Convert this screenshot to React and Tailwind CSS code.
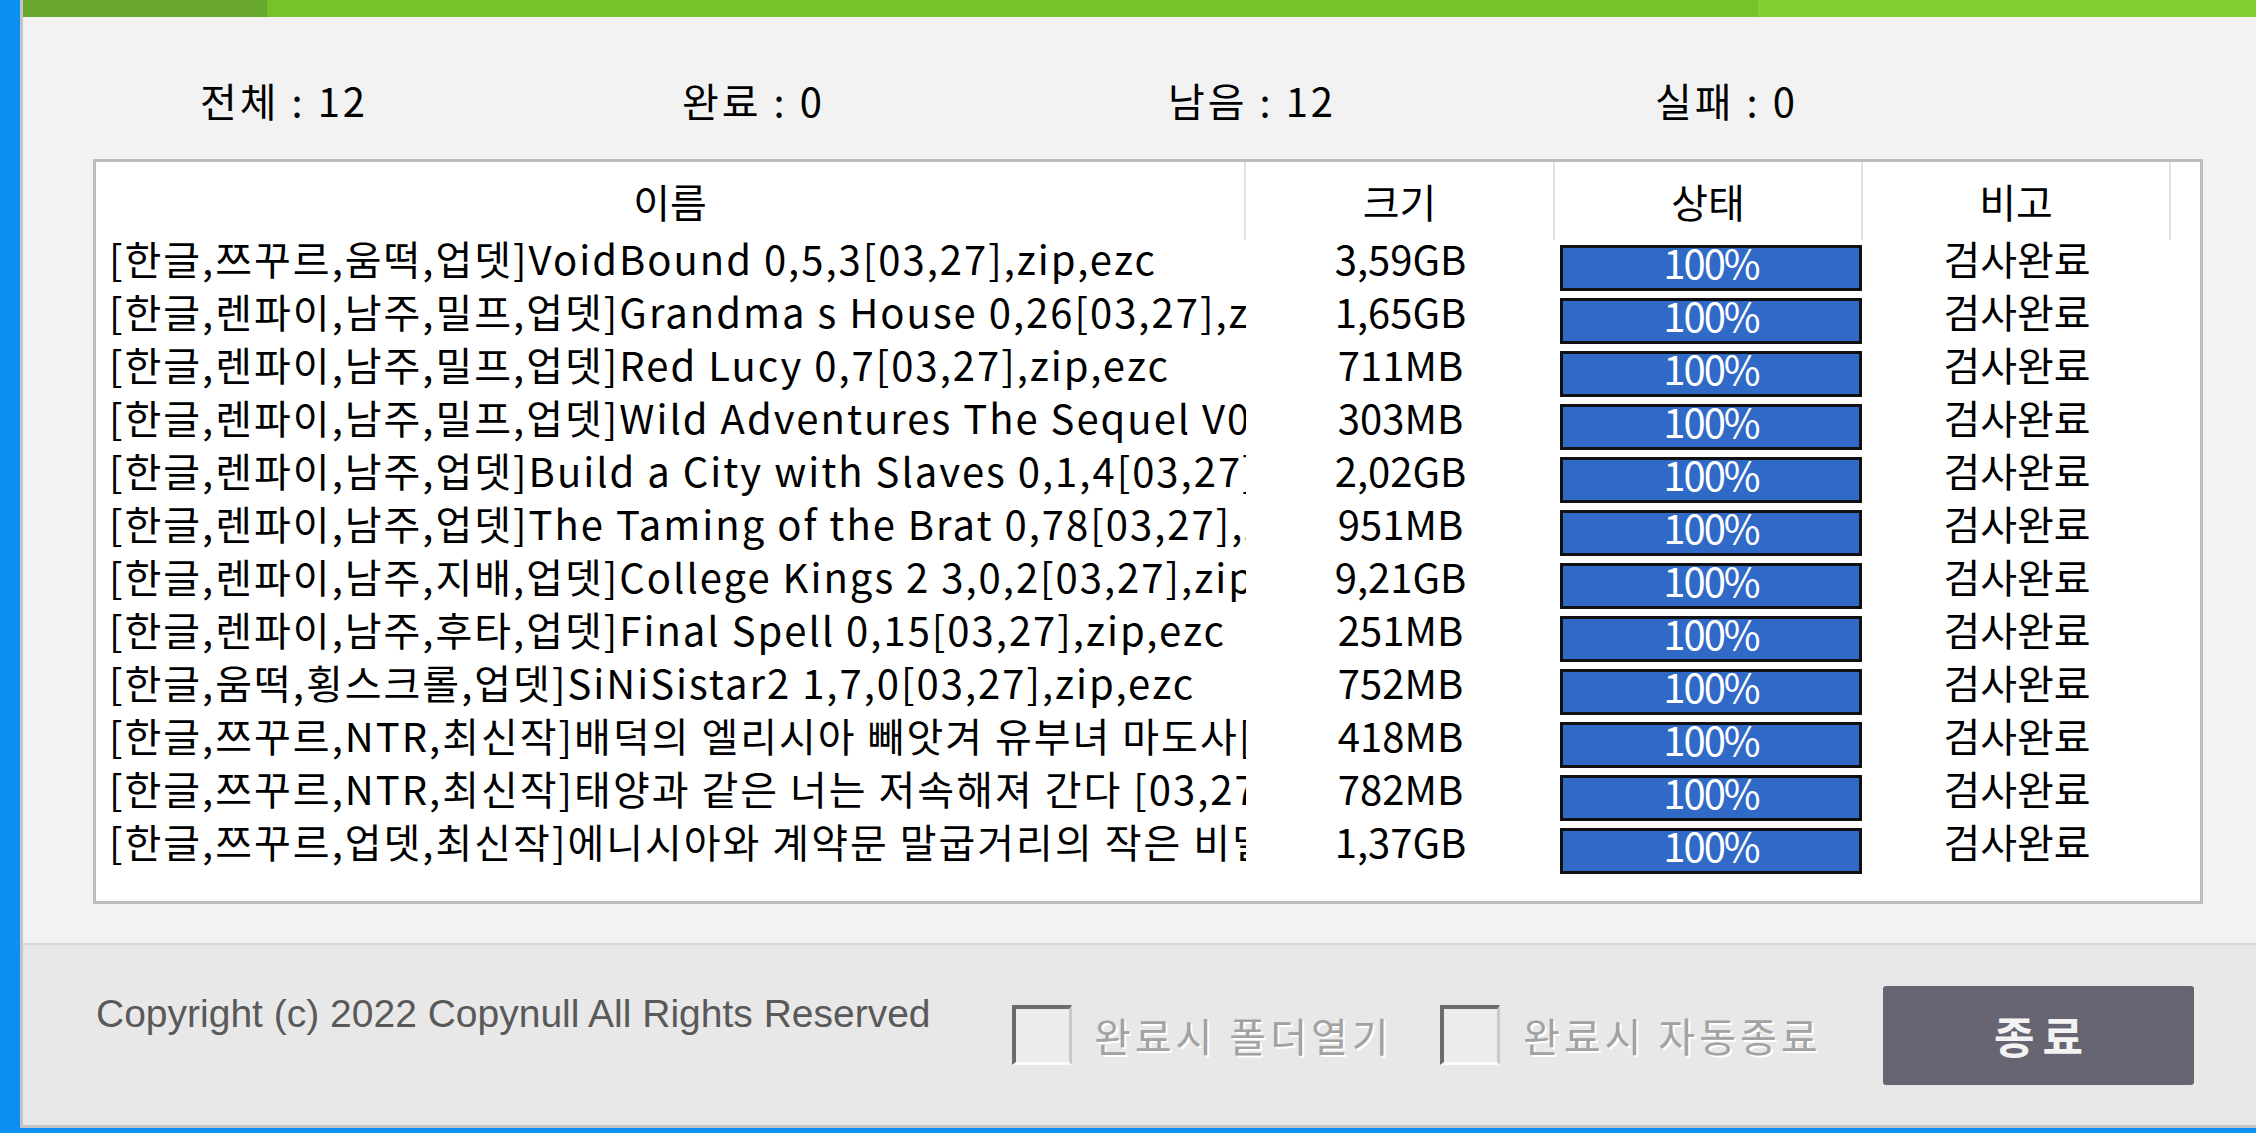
import React from "react";

const rows = [
  ["[한글,쯔꾸르,움떡,업뎃]VoidBound 0,5,3[03,27],zip,ezc", "3,59GB"],
  ["[한글,렌파이,남주,밀프,업뎃]Grandma s House 0,26[03,27],zip,ezc", "1,65GB"],
  ["[한글,렌파이,남주,밀프,업뎃]Red Lucy 0,7[03,27],zip,ezc", "711MB"],
  ["[한글,렌파이,남주,밀프,업뎃]Wild Adventures The Sequel V0,1[03,27],zip,ezc", "303MB"],
  ["[한글,렌파이,남주,업뎃]Build a City with Slaves 0,1,4[03,27],zip,ezc", "2,02GB"],
  ["[한글,렌파이,남주,업뎃]The Taming of the Brat 0,78[03,27],zip,ezc", "951MB"],
  ["[한글,렌파이,남주,지배,업뎃]College Kings 2 3,0,2[03,27],zip,ezc", "9,21GB"],
  ["[한글,렌파이,남주,후타,업뎃]Final Spell 0,15[03,27],zip,ezc", "251MB"],
  ["[한글,움떡,횡스크롤,업뎃]SiNiSistar2 1,7,0[03,27],zip,ezc", "752MB"],
  ["[한글,쯔꾸르,NTR,최신작]배덕의 엘리시아 빼앗겨 유부녀 마도사[03,27],zip,ezc", "418MB"],
  ["[한글,쯔꾸르,NTR,최신작]태양과 같은 너는 저속해져 간다 [03,27],zip,ezc", "782MB"],
  ["[한글,쯔꾸르,업뎃,최신작]에니시아와 계약문 말굽거리의 작은 비밀[03,27],zip,ezc", "1,37GB"],
];

function Checkbox() {
  return (
    <div className="w-[60px] h-[60px] shrink-0 border-t-[4px] border-l-[4px] border-r-[3px] border-b-[3px] border-t-[#6b6b6b] border-l-[#6b6b6b] border-r-[#c9c9c9] border-b-[#fbfbfb] bg-[#ececec]" />
  );
}

export default function App() {
  const kr = "font-['Noto_Sans_CJK_KR','Noto_Sans',sans-serif]";
  return (
    <div className={`w-[2256px] h-[1133px] bg-[#0b8ff2] flex overflow-hidden ${kr}`}>
      <div className="w-[20px] shrink-0" />
      <div className="flex-1 h-[1128px] flex flex-col border-l-[3px] border-b-[3px] border-[#c4c4c4] bg-[#f2f2f2]">
        {/* progress bar */}
        <div className="h-[17px] flex shrink-0">
          <div className="w-[244px] bg-[#69a82e]" />
          <div className="w-[1491px] bg-[#77c22a]" />
          <div className="flex-1 bg-[#82cf31]" />
        </div>

        {/* stats */}
        <div className="h-[142px] shrink-0 flex items-start pt-[63px] pl-[177px] text-[40px] leading-[40px] tracking-[3px] text-black">
          <div className="w-[482px] whitespace-nowrap">전체 : 12</div>
          <div className="w-[486px] whitespace-nowrap">완료 : 0</div>
          <div className="w-[487px] whitespace-nowrap">남음 : 12</div>
          <div className="whitespace-nowrap">실패 : 0</div>
        </div>

        {/* table */}
        <div className="ml-[70px] w-[2110px] h-[745px] shrink-0 border-[3px] border-[#bcbcbc] bg-white flex flex-col text-[40px] text-black">
          <div className="h-[78px] flex leading-[40px]">
            <div className="w-[1150px] border-r-[2px] border-[#e3e3e3] flex items-center justify-center">이름</div>
            <div className="w-[309px] border-r-[2px] border-[#e3e3e3] flex items-center justify-center">크기</div>
            <div className="w-[308px] border-r-[2px] border-[#e3e3e3] flex items-center justify-center">상태</div>
            <div className="w-[308px] border-r-[2px] border-[#e3e3e3] flex items-center justify-center">비고</div>
            <div className="flex-1" />
          </div>
          {rows.map(([name, size], i) => (
            <div key={i} className="h-[53px] flex shrink-0 leading-[36px]">
              <div className="w-[1150px] pl-[13px] pr-[6px] overflow-hidden whitespace-nowrap tracking-[2px]">{name}</div>
              <div className="w-[309px] text-center whitespace-nowrap">{size}</div>
              <div className="w-[308px] pl-[5px] pt-[5px]">
                <div className="w-[302px] h-[46px] border-[3px] border-[#111111] bg-[#3169c6] text-white text-center leading-[28px] tracking-[-2px]">
                  100%
                </div>
              </div>
              <div className="w-[308px] text-center whitespace-nowrap">검사완료</div>
              <div className="flex-1" />
            </div>
          ))}
        </div>

        <div className="h-[39px] shrink-0" />

        {/* bottom */}
        <div className="flex-1 border-t-[2px] border-[#d7d7d7] bg-[#e8e8e8] flex items-center">
          <div className="w-[989px] shrink-0 pl-[73px] self-start mt-[47px] font-['Liberation_Sans',Arial,sans-serif] text-[39px] leading-[44px] text-[#595959] whitespace-nowrap">
            Copyright (c) 2022 Copynull All Rights Reserved
          </div>
          <Checkbox />
          <div className="w-[368px] shrink-0 pl-[22px] text-[40px] leading-[40px] tracking-[4px] text-[#a2a2a2] whitespace-nowrap [text-shadow:2px_2px_0_#ffffff]">
            완료시 폴더열기
          </div>
          <Checkbox />
          <div className="w-[383px] shrink-0 pl-[23px] text-[40px] leading-[40px] tracking-[4px] text-[#a2a2a2] whitespace-nowrap [text-shadow:2px_2px_0_#ffffff]">
            완료시 자동종료
          </div>
          <button className="w-[311px] h-[99px] shrink-0 rounded-[3px] bg-[#666571] text-[#f3f3f3] text-[44px] font-bold leading-[44px] tracking-[8px] pl-[8px] flex items-center justify-center">
            종료
          </button>
        </div>
      </div>
    </div>
  );
}
